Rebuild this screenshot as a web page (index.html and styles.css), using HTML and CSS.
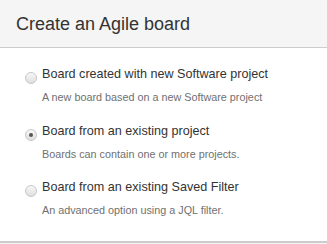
FILE: index.html
```html
<!DOCTYPE html>
<html lang="en">
<head>
    <meta charset="UTF-8">
    <title>Create an Agile board</title>
    <link rel="stylesheet" href="styles.css">
</head>
<body>

    <!-- Dialog header -->
    <div class="dialog-header">
        <h2>Create an Agile board</h2>
    </div>

    <!-- Options -->
    <div class="dialog-body">
        <label class="option">
            <span class="radio"></span>
            <span class="option-text">
                <span class="option-title">Board created with new Software project</span>
                <span class="option-desc">A new board based on a new Software project</span>
            </span>
        </label>
        <label class="option">
            <span class="radio checked"></span>
            <span class="option-text">
                <span class="option-title">Board from an existing project</span>
                <span class="option-desc">Boards can contain one or more projects.</span>
            </span>
        </label>
        <label class="option">
            <span class="radio"></span>
            <span class="option-text">
                <span class="option-title">Board from an existing Saved Filter</span>
                <span class="option-desc">An advanced option using a JQL filter.</span>
            </span>
        </label>
    </div>

    <div class="dialog-footer"></div>

</body>
</html>
```

FILE: styles.css
```css
/* General */
* {
    margin: 0;
    padding: 0;
    box-sizing: border-box;
}

body {
    font-family: Arial, "Liberation Sans", sans-serif;
    background: #fff;
    color: #333;
}

/* Header */
.dialog-header {
    height: 48px;
    background: #f5f5f5;
    border-bottom: 1px solid #ccc;
    padding: 14px 16px 0;
}

.dialog-header h2 {
    font-size: 18px;
    line-height: 21px;
    font-weight: normal;
    color: #333;
}

/* Body */
.dialog-body {
    height: 193px;
    padding: 19px 0 0 25px;
    display: flex;
    flex-direction: column;
    gap: 19.5px;
}

.option {
    display: flex;
    align-items: flex-start;
}

.radio {
    flex-shrink: 0;
    width: 12px;
    height: 12px;
    margin-top: 5px;
    margin-right: 5px;
    border-radius: 50%;
    border: 1px solid #c8c8c8;
    background: linear-gradient(#f8f8f8, #dedede);
    display: flex;
    align-items: center;
    justify-content: center;
}

.radio.checked::after {
    content: "";
    width: 4px;
    height: 4px;
    border-radius: 50%;
    background: #555;
}

.option-text {
    display: flex;
    flex-direction: column;
}

.option-title {
    font-size: 12.6px;
    line-height: 15px;
    color: #333;
}

.option-desc {
    margin-top: 9px;
    font-size: 10.8px;
    line-height: 13px;
    color: #707070;
}

/* Footer */
.dialog-footer {
    border-top: 2px solid #ccc;
    height: 3px;
    background: #f5f5f5;
}
```
